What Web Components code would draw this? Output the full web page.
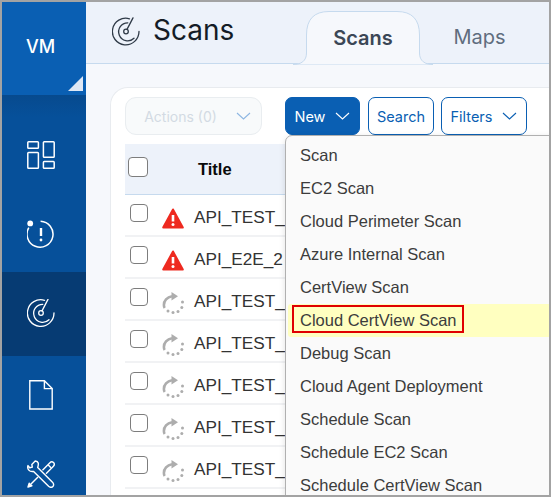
<!DOCTYPE html>
<html lang="en"><head><meta charset="utf-8"><title>Scans</title>
<style>
html,body{margin:0;padding:0;background:#fff}
body{font-family:"Liberation Sans",Arial,sans-serif}
</style></head><body>
<vm-app>
  <vm-sidebar slot="side"></vm-sidebar>
  <vm-header slot="head"></vm-header>
  <vm-card slot="body">
    <vm-toolbar></vm-toolbar>
    <vm-table></vm-table>
  </vm-card>
</vm-app>
<script>
const GAUGE = `<path d="M17.500 1.300A13.300 13.300 0 1 0 27 14" fill="none" stroke="currentColor" stroke-width="1.300" stroke-linecap="round"/>
<path d="M15.800 5.300A9 9 0 1 0 22 20.700" fill="none" stroke="currentColor" stroke-width="1.300" stroke-linecap="round"/>
<circle cx="14" cy="14" r="2.300" fill="none" stroke="currentColor" stroke-width="1.300"/>
<path d="M15 11.900 21 .4" fill="none" stroke="currentColor" stroke-width="1.300" stroke-linecap="round"/>`;
function def(name, css, html, setup){
  customElements.define(name, class extends HTMLElement{
    constructor(){super();const r=this.attachShadow({mode:"open"});
      r.innerHTML=`<style>${css}</style>${typeof html==="function"?html(this):html}`;}
    connectedCallback(){setup&&setup(this)}
  });
}
def("vm-app",`
:host{display:flex;box-sizing:border-box;width:551px;height:497px;border:2px solid #a3a3a3;overflow:hidden;background:#f6f8fc}
.r{flex:1;min-width:0;display:flex;flex-direction:column}
.b{flex:1;min-height:0;padding:23px 0 0 24px;display:flex}
`,`<slot name="side"></slot><div class="r"><slot name="head"></slot><div class="b"><slot name="body"></slot></div></div>`);

const icons={
 dash:`<svg width="28" height="28" viewBox="0 0 28 28" fill="none" stroke="currentColor" stroke-width="1.500"><rect x=".8" y=".8" width="10.600" height="6.400" rx=".8"/><rect x="16.400" y=".8" width="10.800" height="15.400" rx=".8"/><rect x=".8" y="11.400" width="10.600" height="15.800" rx=".8"/><rect x="16.400" y="20.600" width="10.800" height="6.600" rx=".8"/></svg>`,
 alert:`<svg width="28" height="30" viewBox="0 0 28 30" fill="none" stroke="currentColor"><path d="M13.600 2.200A13 13 0 1 1 1.800 8.600" stroke-width="1.500"/><circle cx="3.200" cy="4.400" r="2.900" fill="currentColor" stroke="none"/><path d="M14 9v8" stroke-width="2.400"/><circle cx="14" cy="21" r="1.400" fill="currentColor" stroke="none"/></svg>`,
 gauge:`<svg width="28" height="28" viewBox="0 0 28 28">${GAUGE}</svg>`,
 file:`<svg width="24" height="30" viewBox="0 0 24 30" fill="none" stroke="currentColor" stroke-width="1.400"><path d="M.8.8H15.400L23.200 8.600V29H.8Z"/><path d="M15.400.8V8.600H23.200"/></svg>`,
 tools:`<svg width="28" height="28" viewBox="0 0 28 28" fill="none" stroke="currentColor" stroke-width="1.400" stroke-linejoin="round"><path d="M8.200 1 4.800 4.400l.5 2.700-2.600.6L1 5.600C-.2 9 2.500 12.300 6.600 11.400L21.600 26.200c1.300 1.200 3.200 1.300 4.300.2 1.100-1.100.9-2.900-.4-4.100L10.700 7.500C11.800 3.800 11.800 1.500 8.200 1Z"/><path d="M15.500 10.300 22.700 2.900c1.200-1.200 2.800-1.300 3.800-.3s.9 2.700-.3 3.900l-7.200 7.200"/><path d="M21 4.700l3 3"/><path d="M11 17 4 24"/><path d="M1 27l1.200-3.800 2.700 2.600z" fill="currentColor"/></svg>`
};
def("vm-sidebar",`
:host{display:flex;flex-direction:column;flex:none;width:84px;height:100%;background:#06509a;color:#fff}
.top{flex:none;position:relative;height:93px;background:#0a5fb3;display:flex;align-items:center;justify-content:center;font:500 18px Inter,sans-serif;box-sizing:border-box;padding:0 7px 4px 0}
.tri{position:absolute;right:3px;bottom:4px;width:15px;height:15px;background:#dfe8f5;clip-path:polygon(100% 0,100% 100%,0 100%)}
nav{flex:none;padding-top:20px;background:linear-gradient(#074a8e,#06509a 22px)}
.i{height:79px;display:flex;align-items:center;justify-content:center;padding-right:7px}
.a{height:84px;margin:-1px 0 -1px;background:#063b73;padding-bottom:2px;box-sizing:border-box}
`,`<div class="top">VM<span class="tri"></span></div><nav>
<div class="i">${icons.dash}</div><div class="i">${icons.alert}</div><div class="i a">${icons.gauge}</div><div class="i">${icons.file}</div><div class="i">${icons.tools}</div></nav>`);

def("vm-header",`
:host{display:flex;align-items:flex-end;box-sizing:border-box;height:62px;background:#edf2fa;border-bottom:1px solid #c6daee;padding-left:26px}
.g{color:#2f3a47;display:flex;align-self:center;margin:0 13px 3px 0}
h1{margin:0 74px 0 0;align-self:center;font:400 28px Inter,sans-serif;color:#141c26;width:80px;padding-bottom:5px}
.tab{position:relative;box-sizing:border-box;width:112px;height:53px;margin-bottom:-1px;display:flex;align-items:center;justify-content:center;font:600 20px Inter,sans-serif;color:#3b4756}
.tab svg{position:absolute;left:-14px;top:0}
.tab span{position:relative}
.m{width:121px;font-weight:400;color:#5f6d7e;padding-bottom:2px}
`,`<span class="g"><svg width="28" height="29" viewBox="0 0 28 28">${GAUGE}</svg></span><h1>Scans</h1>
<div class="tab"><svg width="140" height="54" viewBox="0 0 140 54"><path d="M0 53.500C8 53.500 13.500 50 13.500 42V24Q13.500 .5 36 .5H104Q126.500 .5 126.500 24V42C126.500 50 132 53.500 140 53.500V54H0Z" fill="#f6f8fc" stroke="#c6daee"/></svg><span>Scans</span></div><div class="tab m"><span>Maps</span></div>`);

def("vm-card",`
:host{display:block;flex:1;min-width:0;box-sizing:border-box;background:#fff;border:1px solid #e8ebef;border-right:0;border-bottom:0;border-top-left-radius:18px;padding:9px 0 0 14px}
`,`<slot></slot>`);

const chev=c=>`<svg width="15" height="8" viewBox="0 0 15 8" fill="none" stroke="${c}" stroke-width="1.100"><path d="M1 1l6.500 6L14 1"/></svg>`;
def("vm-button",`
:host{display:inline-flex;align-items:center;box-sizing:border-box;height:38px;border:1.300px solid #0a5fb3;border-radius:7px;font:400 14.500px Inter,sans-serif;color:#0a5fb3;background:#fff;justify-content:center;gap:10px}
:host([primary]){background:#0a5fb3;color:#fff}
:host([off]){background:#f8fafb;border-color:#e9edf0;color:#d3dae3;border-radius:11px;font-size:14px;padding-left:8px}
`,`<slot></slot>`);
def("vm-toolbar",`
:host{display:flex;height:38px;align-items:flex-start;position:relative;z-index:2}
.n{position:relative;margin-left:23px}
vm-button.s{margin-left:8px;width:66px}
vm-button.f{margin-left:7px;width:86px}
`,`<vm-button off style="width:137px;gap:19px">Actions (0) ${chev("#8db6e2")}</vm-button>
<div class="n"><vm-button primary style="width:75px">New ${chev("#fff")}</vm-button><vm-menu></vm-menu></div>
<vm-button class="s">Search</vm-button><vm-button class="f">Filters ${chev("#0a5fb3")}</vm-button>`);

const items=["Scan","EC2 Scan","Cloud Perimeter Scan","Azure Internal Scan","CertView Scan","Cloud CertView Scan","Debug Scan","Cloud Agent Deployment","Schedule Scan","Schedule EC2 Scan","Schedule CertView Scan"];
def("vm-menu",`
:host{position:absolute;left:0;top:38px;width:280px;box-sizing:border-box;background:#fafafa;border:1px solid #b0b0b0;border-radius:7px 7px 0 0;padding:3px 0 0 2px;font:16.500px "Liberation Sans",Arial,sans-serif;color:#3c3c3c;box-shadow:0 2px 6px rgba(0,0,0,.12)}
div{height:33px;line-height:33px;padding-left:12px}
.h{background:#ffffc0;border-radius:3px;position:relative;line-height:33px}
.h i{position:absolute;left:4px;top:1px;width:172px;height:28px;box-sizing:border-box;border:2px solid #e00000}
`,items.map(t=>t==="Cloud CertView Scan"?`<div class="h"><i></i>${t}</div>`:`<div>${t}</div>`).join(""));

const tri=`<svg width="22" height="21" viewBox="0 0 22 21"><path d="M11 1.500 20.800 19.500H1.200Z" fill="#ee2a20" stroke="#ee2a20" stroke-width="2" stroke-linejoin="round"/><path d="M11 7v6.500" stroke="#fff" stroke-width="2.600"/><circle cx="11" cy="16.500" r="1.500" fill="#fff"/></svg>`;
const spin=`<svg width="22" height="22" viewBox="0 0 22 22"><path d="M10 4.300C5 5 1.800 9 1.900 13c0 1.500.3 2.300.8 3" fill="none" stroke="#adadad" stroke-width="2.600"/><path d="M9.500 0l6.500 4.200-6.500 4.300z" fill="#adadad"/><g fill="#adadad"><circle cx="6" cy="19" r="1.500"/><circle cx="11" cy="20.500" r="1.500"/><circle cx="16" cy="19.500" r="1.500"/><circle cx="19.800" cy="15.500" r="1.500"/><circle cx="20.500" cy="10" r="1.500"/></g></svg>`;
def("vm-checkbox",`
:host{display:block;box-sizing:border-box;width:18px;height:18px;border:1.500px solid #7d7d7d;border-radius:4px;background:#fff;flex:none}
:host([big]){width:20px;height:20px}
`,``);
def("vm-row",`
:host{display:flex;box-sizing:border-box;height:42px;border-bottom:2px solid #f1f2f4;padding:9px 0 0 5px;font:17.200px "Liberation Sans",Arial,sans-serif;color:#333;white-space:nowrap}
.i{margin:4px 10px 0 14px;width:22px;height:22px;flex:none;display:flex}
.t{line-height:20px;margin-top:3px}
`,el=>`<vm-checkbox></vm-checkbox><span class="i">${el.getAttribute("s")==="e"?tri:spin}</span><span class="t">${el.getAttribute("t")}</span>`);
const rows=[["e","API_TEST_"],["e","API_E2E_2"],["s","API_TEST_"],["s","API_TEST_"],["s","API_TEST_"],["s","API_TEST_"],["s","API_TEST_"]];
def("vm-table",`
:host{display:block;margin-top:9px;overflow:hidden}
.h{display:flex;align-items:center;box-sizing:border-box;height:51px;background:#edf2fa;border-bottom:1px solid #c6daee;padding-left:3px;font:700 16.500px "Liberation Sans",Arial,sans-serif;color:#0a0a0a}
.h span{margin-left:50px}
.h vm-checkbox{margin-top:-4px}
`,`<div class="h"><vm-checkbox big></vm-checkbox><span>Title</span></div>${rows.map(r=>`<vm-row s="${r[0]}" t="${r[1]}"></vm-row>`).join("")}`);
</script>
</body></html>
